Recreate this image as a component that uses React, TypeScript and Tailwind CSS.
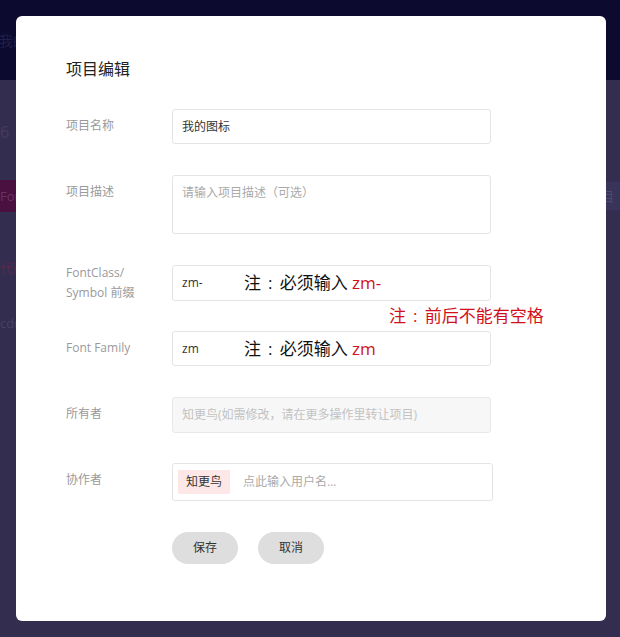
const Field = ({
  label,
  children,
  labelClass = "pt-[7px]",
  className = "mb-[31px]",
}: {
  label: React.ReactNode;
  children: React.ReactNode;
  labelClass?: string;
  className?: string;
}) => (
  <div className={`flex ${className}`}>
    <div className={`w-[106px] shrink-0 text-[12px] leading-[20px] text-[#9a9a9a] ${labelClass}`}>
      {label}
    </div>
    {children}
  </div>
);

// centred colon, the way the reference's font draws "："
const Colon = () => <span className="inline-block w-[1.1em] text-center">:</span>;

const Note = ({ value }: { value: string }) => (
  <span className="text-[17px] leading-[22px] text-[#111] whitespace-nowrap">
    注<Colon />必须输入 <span className="text-[#d0101b]">{value}</span>
  </span>
);

const App = () => {
  return (
    <div className="relative w-[620px] h-[637px] overflow-hidden bg-[#332e50] font-['Open_Sans','Noto_Sans_CJK_SC',sans-serif]">
      {/* page behind the mask */}
      <div className="h-[80px] bg-[#0c0a2f] flex items-center">
        <span className="-ml-[1px] text-[14px] text-[#221f4c]">我的项目</span>
      </div>
      <div className="flex flex-col">
        <span className="mt-[42px] text-[16px] leading-[20px] text-[#4a3a5f]">6</span>
        <div className="mt-[38px] flex justify-between">
          <div className="h-[32px] w-[90px] bg-[#4a1040] text-[13px] leading-[32px] text-[#653660]">
            Font class
          </div>
          <div className="my-[2px] h-[28px] w-[60px] bg-[#39345a] text-right text-[13px] leading-[28px] text-[#4f4a70] pr-[6px]">
            项目
          </div>
        </div>
        <span className="mt-[46px] text-[13px] leading-[20px] text-[#5a2848]">代码</span>
        <span className="mt-[35px] text-[13px] leading-[20px] text-[#474263]">cdn</span>
      </div>

      {/* modal */}
      <div className="absolute left-[16px] top-[16px] w-[590px] h-[605px] rounded-[6px] bg-white pl-[50px] pt-[42px]">
        <h2 className="text-[16px] leading-[22px] text-[#222]">项目编辑</h2>

        <form className="mt-[29px]">
          <Field label="项目名称">
            <div className="w-[319px] h-[35px] flex items-center rounded-[3px] border border-[#e4e4e4] px-[9px] text-[12px] text-[#333]">
              我的图标
            </div>
          </Field>

          <Field label="项目描述">
            <div className="w-[319px] h-[59px] rounded-[3px] border border-[#e4e4e4] px-[9px] pt-[7px] text-[12px] leading-[20px] text-[#aaa]">
              请输入项目描述（可选）
            </div>
          </Field>

          <Field
            label={
              <>
                FontClass/
                <br />
                Symbol 前缀
              </>
            }
            labelClass="-mt-[2px]"
            className="h-[36px]"
          >
            <div className="w-[319px] h-[36px] flex items-center rounded-[3px] border border-[#e4e4e4] pl-[9px] text-[12px] text-[#333]">
              <span className="w-[62px]">zm-</span>
              <Note value="zm-" />
            </div>
          </Field>

          <div className="h-[30px] pl-[323px] text-[17px] leading-[30px] text-[#d0101b] whitespace-nowrap">
            注<Colon />前后不能有空格
          </div>

          <Field label="Font Family">
            <div className="w-[319px] h-[35px] flex items-center rounded-[3px] border border-[#e4e4e4] pl-[9px] text-[12px] text-[#333]">
              <span className="w-[62px]">zm</span>
              <Note value="zm" />
            </div>
          </Field>

          <Field label="所有者" className="mb-[30px]">
            <div className="w-[319px] h-[36px] flex items-center rounded-[3px] border border-[#e8e8e8] bg-[#f7f7f7] px-[9px] text-[12px] text-[#c2c2c2]">
              知更鸟(如需修改，请在更多操作里转让项目)
            </div>
          </Field>

          <Field label="协作者">
            <div className="w-[321px] h-[38px] flex items-center rounded-[3px] border border-[#e4e4e4] pl-[5px] text-[12px]">
              <span className="h-[24px] px-[8px] leading-[24px] bg-[#fde8e7] text-[#333]">知更鸟</span>
              <span className="ml-[13px] text-[#aaa]">点此输入用户名...</span>
            </div>
          </Field>

          <div className="flex gap-[20px] pl-[106px]">
            <button type="button" className="w-[66px] h-[32px] rounded-full bg-[#dedede] text-[12px] text-[#333]">
              保存
            </button>
            <button type="button" className="w-[66px] h-[32px] rounded-full bg-[#dedede] text-[12px] text-[#333]">
              取消
            </button>
          </div>
        </form>
      </div>
    </div>
  );
};

export default App;
